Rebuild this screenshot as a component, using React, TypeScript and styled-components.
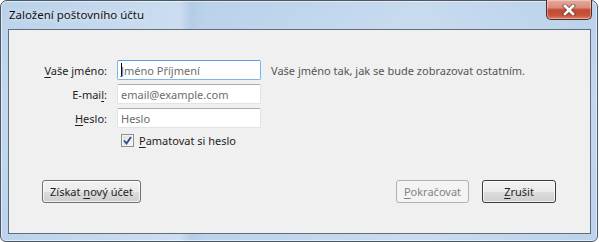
import React from "react";
import styled, { createGlobalStyle, css } from "styled-components";

// ---------- Global ----------

const GlobalStyle = createGlobalStyle`
  html, body {
    margin: 0;
    padding: 0;
    background: #ffffff;
  }
  body {
    font-family: "Noto Sans", "Open Sans", sans-serif;
    font-size: 11px;
    line-height: 15px;
    color: #1e1e1e;
  }
`;

// ---------- Window frame ----------

const Frame = styled.div`
  position: relative;
  box-sizing: border-box;
  width: 598px;
  height: 242px;
  border: 1px solid #4b5866;
  border-radius: 7px 7px 6px 6px;
  background:
    linear-gradient(90deg, rgba(255,255,255,0) 0%, rgba(255,255,255,0.25) 30%, rgba(160,185,210,0.25) 32%, rgba(255,255,255,0) 34%, rgba(255,255,255,0.2) 70%, rgba(255,255,255,0) 100%),
    linear-gradient(180deg, #b9d1ea 0%, #c3d8ee 40%, #bcd3eb 100%);
  box-shadow: inset 0 0 0 1px rgba(255,255,255,0.55);
  padding: 0 6px 7px 7px;
  display: flex;
  flex-direction: column;
`;

const TitleBar = styled.div`
  height: 28px;
  display: flex;
  align-items: center;
  padding-left: 1px;
  padding-bottom: 1px;
  box-sizing: border-box;
`;

const Title = styled.span`
  font-size: 11.5px;
  color: #111;
  text-shadow: 0 0 6px rgba(255,255,255,0.9);
`;

const CloseButton = styled.div`
  position: absolute;
  top: -1px;
  right: 5px;
  width: 46px;
  height: 20px;
  box-sizing: border-box;
  border: 1px solid #5b2a22;
  border-top: none;
  border-radius: 0 0 5px 5px;
  background: linear-gradient(180deg, #e6a99c 0%, #d98d7c 40%, #c44a32 52%, #c6533a 80%, #d9826c 100%);
  box-shadow: inset 0 0 0 1px rgba(255,255,255,0.35);
  display: flex;
  align-items: center;
  justify-content: center;
`;

// ---------- Client area ----------

const Client = styled.div`
  flex: 1;
  border: 1px solid #5e6e80;
  background: #f0f0f0;
  display: flex;
  flex-direction: column;
  padding-top: 30px;
`;

const Form = styled.div`
  display: grid;
  grid-template-columns: 98px 144px auto;
  column-gap: 10px;
  row-gap: 4px;
  align-items: center;
`;

const Label = styled.label`
  text-align: right;
  color: #1e1e1e;
  white-space: nowrap;
`;

const Key = styled.span`
  text-decoration: underline;
  text-underline-offset: 2px;
`;

const TextBox = styled.div<{ $focused?: boolean }>`
  height: 20px;
  box-sizing: border-box;
  border: 1px solid #e2e3ea;
  border-top-color: #abadb3;
  background: #fff;
  border-radius: 2px;
  display: flex;
  align-items: center;
  padding-left: 3px;
  color: #6d6d6d;
  white-space: nowrap;
  ${(p) =>
    p.$focused &&
    css`
      border-color: #7eb4ea;
      border-top-color: #569de5;
    `}
`;

const Caret = styled.span`
  display: inline-block;
  width: 1px;
  height: 14px;
  background: #000;
  margin-right: -1px;
`;

const Hint = styled.span`
  color: #555;
  white-space: nowrap;
`;

const CheckRow = styled.div`
  grid-column: 2 / 4;
  display: flex;
  align-items: center;
  gap: 5px;
  margin-top: 1px;
  padding-left: 4px;
`;

const CheckBox = styled.span`
  width: 13px;
  height: 13px;
  box-sizing: border-box;
  border: 1px solid #8f8f8f;
  background: linear-gradient(135deg, #dcdcdc 0%, #fafafa 100%);
  box-shadow: inset 0 0 0 1px #f4f4f4;
  display: flex;
  align-items: center;
  justify-content: center;
`;

// ---------- Buttons ----------

const ButtonRow = styled.div`
  display: flex;
  align-items: center;
  margin-top: 32px;
  padding: 0 34px 0 33px;
`;

const Spacer = styled.div`
  flex: 1;
`;

const Button = styled.div<{ $disabled?: boolean; $width: number; $default?: boolean }>`
  width: ${(p) => p.$width}px;
  height: 23px;
  box-sizing: border-box;
  border: 1px solid #707070;
  border-radius: 3px;
  background: linear-gradient(180deg, #f2f2f2 0%, #ebebeb 50%, #dddddd 51%, #cfcfcf 100%);
  box-shadow: inset 0 0 0 1px rgba(255,255,255,0.7);
  display: flex;
  align-items: center;
  justify-content: center;
  color: #1e1e1e;
  white-space: nowrap;
  & + & {
    margin-left: 13px;
  }
  ${(p) =>
    p.$default &&
    css`
      border-color: #3c3c3c;
    `}
  ${(p) =>
    p.$disabled &&
    css`
      border-color: #adb2b5;
      background: #f4f4f4;
      box-shadow: none;
      color: #838383;
    `}
`;

// ---------- App ----------

export default function App() {
  return (
    <>
      <GlobalStyle />
      <Frame>
        <TitleBar>
          <Title>Založení poštovního účtu</Title>
        </TitleBar>
        <CloseButton>
          <svg width="16" height="12" viewBox="0 0 16 12">
            <path
              d="M4 2 L12 10 M12 2 L4 10"
              stroke="#3a2a2a"
              strokeWidth="4.4"
              strokeLinecap="square"
              fill="none"
              opacity="0.5"
            />
            <path
              d="M4 2 L12 10 M12 2 L4 10"
              stroke="#ffffff"
              strokeWidth="2.6"
              strokeLinecap="square"
              fill="none"
            />
          </svg>
        </CloseButton>
        <Client>
          <Form>
            <Label>
              <Key>V</Key>aše jméno:
            </Label>
            <TextBox $focused>
              <Caret />
              Jméno Příjmení
            </TextBox>
            <Hint>Vaše jméno tak, jak se bude zobrazovat ostatním.</Hint>

            <Label>
              E-mai<Key>l</Key>:
            </Label>
            <TextBox>email@example.com</TextBox>
            <span />

            <Label>
              <Key>H</Key>eslo:
            </Label>
            <TextBox>Heslo</TextBox>
            <span />

            <span />
            <CheckRow>
              <CheckBox>
                <svg width="9" height="9" viewBox="0 0 9 9">
                  <path d="M1 4.5 L3.5 7.5 L8 1" stroke="#2b4a8a" strokeWidth="1.8" fill="none" />
                </svg>
              </CheckBox>
              <span>
                <Key>P</Key>amatovat si heslo
              </span>
            </CheckRow>
          </Form>

          <ButtonRow>
            <Button $width={99}>
              Získat&nbsp;<Key>n</Key>ový účet
            </Button>
            <Spacer />
            <Button $width={73} $disabled>
              <Key>P</Key>okračovat
            </Button>
            <Button $width={74} $default>
              <Key>Z</Key>rušit
            </Button>
          </ButtonRow>
        </Client>
      </Frame>
    </>
  );
}
